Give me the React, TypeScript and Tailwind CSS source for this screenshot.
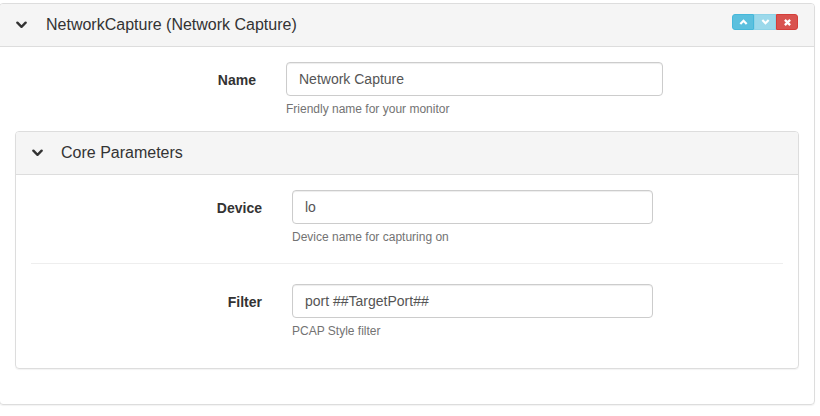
import React from 'react';

function Chevron({ className = '' }: { className?: string }) {
  return (
    <svg viewBox="0 0 12 8" className={className} fill="none">
      <path d="M1.5 1.5 L6 6 L10.5 1.5" stroke="currentColor" strokeWidth="2.6" strokeLinecap="round" strokeLinejoin="round" />
    </svg>
  );
}

function Field({ label, value, help, labelW, inputW }: { label: string; value: string; help: string; labelW: string; inputW: string }) {
  return (
    <div className="flex items-start">
      <label className={`${labelW} text-right font-bold text-sm text-[#333] pt-[8px]`}>{label}</label>
      <div className="ml-[30px]">
        <input
          readOnly
          value={value}
          className={`${inputW} h-[34px] border border-[#ccc] rounded-[4px] px-[12px] text-sm text-[#555] bg-white outline-none shadow-[inset_0_1px_1px_rgba(0,0,0,0.075)]`}
        />
        <p className="text-xs text-[#737373] mt-[5px] leading-[17px]">{help}</p>
      </div>
    </div>
  );
}

export default function App() {
  return (
    <div className="w-[820px] h-[416px] bg-white pt-[3px] font-['Liberation_Sans',Arial,sans-serif]">
      <div className="w-[816px] -ml-px border border-[#ddd] rounded-[4px] shadow-[0_1px_1px_rgba(0,0,0,0.05)]">
        <div className="h-[43px] bg-[#f5f5f5] border-b border-[#ddd] rounded-t-[3px] flex items-center pl-[16px] pr-[16px]">
          <Chevron className="w-[11px] h-[8px] text-[#333]" />
          <span className="ml-[19px] text-base text-[#333]">NetworkCapture (Network Capture)</span>
          <div className="ml-auto flex h-[16px] self-start mt-[10px]">
            <button className="w-[22px] h-full bg-[#5bc0de] border border-[#46b8da] rounded-l-[3px] flex items-center justify-center">
              <svg viewBox="0 0 10 7" className="w-[9px] h-[6px]" fill="none"><path d="M1.3 5.8 L5 2.1 L8.7 5.8" stroke="white" strokeWidth="2.6" /></svg>
            </button>
            <button className="w-[22px] h-full bg-[#9cd9eb] border border-[#8fd3e7] flex items-center justify-center">
              <svg viewBox="0 0 10 7" className="w-[9px] h-[6px]" fill="none"><path d="M1.3 1.2 L5 4.9 L8.7 1.2" stroke="white" strokeWidth="2.6" /></svg>
            </button>
            <button className="w-[22px] h-full bg-[#d9534f] border border-[#d43f3a] rounded-r-[3px] flex items-center justify-center">
              <svg viewBox="0 0 8 8" className="w-[7px] h-[7px]" fill="none"><path d="M1 1 L7 7 M7 1 L1 7" stroke="white" strokeWidth="2.6" /></svg>
            </button>
          </div>
        </div>
        <div className="px-[15px] pt-[15px] pb-[35px]">
          <Field label="Name" value="Network Capture" help="Friendly name for your monitor" labelW="w-[241px]" inputW="w-[377px]" />
          <div className="mt-[13px] border border-[#ddd] rounded-[4px] shadow-[0_1px_1px_rgba(0,0,0,0.05)]">
            <div className="h-[43px] bg-[#f5f5f5] border-b border-[#ddd] rounded-t-[3px] flex items-center pl-[16px]">
              <Chevron className="w-[11px] h-[8px] text-[#333]" />
              <span className="ml-[18px] text-base text-[#333]">Core Parameters</span>
            </div>
            <div className="px-[15px] pt-[15px] pb-[28px]">
              <Field label="Device" value="lo" help="Device name for capturing on" labelW="w-[231px]" inputW="w-[361px]" />
              <div className="border-t border-[#eee] mt-[17px] mb-[20px]" />
              <Field label="Filter" value="port ##TargetPort##" help="PCAP Style filter" labelW="w-[231px]" inputW="w-[361px]" />
            </div>
          </div>
        </div>
      </div>
    </div>
  );
}
